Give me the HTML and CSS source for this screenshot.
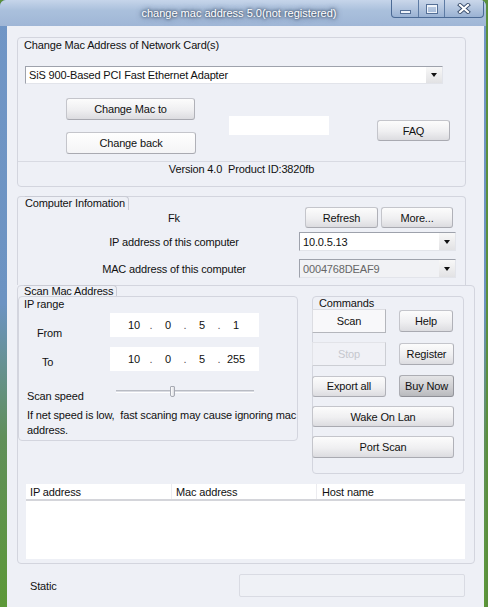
FILE: index.html
```html
<!DOCTYPE html>
<html lang="en">
<head>
    <meta charset="UTF-8">
    <meta name="viewport" content="width=device-width, initial-scale=1.0">
    <title>change mac address 5.0(not registered)</title>
    <link rel="stylesheet" href="styles.css">
</head>
<body>
<div class="window">
    <div class="titlebar">
        <div class="title">change mac address 5.0(not registered)</div>
        <div class="caption-buttons">
            <span class="cap-btn cap-min"><i></i></span>
            <span class="cap-btn cap-max"><i></i></span>
            <span class="cap-btn cap-close">
                <svg width="14" height="11" viewBox="0 0 14 11">
                    <path d="M3 2 L11 9 M11 2 L3 9" stroke="#3b4f6e" stroke-width="4" stroke-linecap="square"/>
                    <path d="M3 2 L11 9 M11 2 L3 9" stroke="#fff" stroke-width="2.2" stroke-linecap="square"/>
                </svg>
            </span>
        </div>
    </div>

    <div class="client">
        <!-- Network card selection -->
        <div class="group group-card">
            <div class="group-title">Change Mac Address of Network Card(s)</div>
            <div class="combo combo-card">
                <span class="combo-value">SiS 900-Based PCI Fast Ethernet Adapter</span>
                <span class="combo-arrow"></span>
            </div>
            <div class="card-actions">
                <div class="change-buttons">
                    <button class="btn btn-change">Change Mac to</button>
                    <button class="btn btn-change btn-back">Change back</button>
                </div>
                <input class="mac-input" type="text">
                <button class="btn btn-faq">FAQ</button>
            </div>
            <div class="version">Version 4.0&nbsp; Product ID:3820fb</div>
        </div>

        <!-- Local computer info -->
        <div class="group group-info">
            <div class="info-title"><span class="tab">Computer Infomation</span></div>
            <div class="info-row">
                <div class="info-label">Fk</div>
                <div class="info-buttons">
                    <button class="btn btn-refresh">Refresh</button>
                    <button class="btn btn-more">More...</button>
                </div>
            </div>
            <div class="info-row info-row-ip">
                <div class="info-label">IP address of this computer</div>
                <div class="combo combo-info">
                    <span class="combo-value">10.0.5.13</span>
                    <span class="combo-arrow"></span>
                </div>
            </div>
            <div class="info-row info-row-mac">
                <div class="info-label">MAC address of this computer</div>
                <div class="combo combo-info combo-mac">
                    <span class="combo-value">0004768DEAF9</span>
                    <span class="combo-arrow"></span>
                </div>
            </div>
        </div>

        <!-- Scanner -->
        <div class="group group-scan">
            <div class="scan-title"><span class="tab">Scan Mac Address</span></div>
            <div class="scan-body">
                <div class="group range-group">
                    <div class="range-title">IP range</div>
                    <div class="ip-row ip-row-from">
                        <div class="ip-label">From</div>
                        <div class="ip-field">
                            <span class="octet">10</span><span class="dot">.</span>
                            <span class="octet">0</span><span class="dot">.</span>
                            <span class="octet">5</span><span class="dot">.</span>
                            <span class="octet">1</span>
                        </div>
                    </div>
                    <div class="ip-row ip-row-to">
                        <div class="ip-label ip-label-to">To</div>
                        <div class="ip-field">
                            <span class="octet">10</span><span class="dot">.</span>
                            <span class="octet">0</span><span class="dot">.</span>
                            <span class="octet">5</span><span class="dot">.</span>
                            <span class="octet">255</span>
                        </div>
                    </div>
                    <div class="speed-row">
                        <div class="speed-label">Scan speed</div>
                        <div class="slider">
                            <span class="slider-track slider-left"></span>
                            <span class="slider-thumb"></span>
                            <span class="slider-track slider-right"></span>
                        </div>
                    </div>
                    <div class="speed-note">If net speed is low,&nbsp; fast scaning may cause ignoring mac<br>address.</div>
                </div>

                <div class="group commands-group">
                    <div class="commands-title">Commands</div>
                    <div class="commands-grid">
                        <button class="btn btn-flat btn-scan">Scan</button>
                        <button class="btn btn-help">Help</button>
                        <button class="btn btn-flat btn-stop" disabled>Stop</button>
                        <button class="btn btn-register">Register</button>
                        <button class="btn btn-export">Export all</button>
                        <button class="btn btn-buy">Buy Now</button>
                        <button class="btn btn-wide btn-wake">Wake On Lan</button>
                        <button class="btn btn-wide btn-port">Port Scan</button>
                    </div>
                </div>
            </div>

            <div class="host-list">
                <div class="list-header">
                    <span class="col col-ip">IP address</span>
                    <span class="col col-mac">Mac address</span>
                    <span class="col col-host">Host name</span>
                </div>
            </div>
        </div>

        <div class="status-row">
            <div class="status-label">Static</div>
            <div class="status-box"></div>
        </div>
    </div>
</div>
</body>
</html>
```

FILE: styles.css
```css
body {
    margin: 0;
    background: #5b8f3c;
    font-family: "Liberation Sans", Arial, sans-serif;
    font-size: 11px;
    letter-spacing: -0.15px;
    color: #111;
}

.window {
    width: 486px;
    height: 607px;
    overflow: hidden;
    border-radius: 6px 6px 0 0;
    background: linear-gradient(to bottom, #7196c6 0%, #6c93c2 50%, #608f5a 72%, #5c9838 100%);
}

/* Title bar */
.titlebar {
    display: flex;
    align-items: flex-start;
    height: 26px;
    background: linear-gradient(to bottom, #c6d5ea 0%, #aac0dc 40%, #9fb6d6 100%);
}

.title {
    flex: 1;
    padding-left: 87px;
    text-align: center;
    line-height: 26px;
    color: #fff;
    font-size: 11px;
    letter-spacing: 0;
    text-shadow: 0 0 3px #1d2d44, 0 0 6px #2a3e5c;
}

.caption-buttons {
    display: flex;
    height: 17px;
    margin-right: 2px;
    border: 1px solid #4b6a95;
    border-top: none;
    border-radius: 0 0 4px 4px;
    overflow: hidden;
    background: linear-gradient(to bottom, #cad7ea, #9ab2d3);
}

.cap-btn {
    display: flex;
    align-items: center;
    justify-content: center;
    border-left: 1px solid #5d7ba4;
}

.cap-min {
    width: 26px;
    border-left: none;
}

.cap-min i {
    display: block;
    width: 9px;
    height: 2px;
    margin-top: 6px;
    background: #eef3fa;
    border: 1px solid #546f96;
}

.cap-max {
    width: 25px;
}

.cap-max i {
    display: block;
    width: 8px;
    height: 5px;
    border: 1px solid #eef3fa;
    border-top-width: 2px;
    outline: 1px solid #546f96;
}

.cap-close {
    width: 38px;
}

/* Client area */
.client {
    width: 477px;
    height: 581px;
    margin-left: 7px;
    background: #eef0f6;
    overflow: hidden;
}

.group {
    box-sizing: border-box;
    border: 1px solid #d3d5de;
    border-radius: 4px;
}

/* group caption drawn in its own little tab */
.tab {
    display: inline-block;
    padding-right: 3px;
    border-top: 1px solid #c9cbd4;
    border-right: 1px solid #c9cbd4;
    border-top-right-radius: 4px;
}

.btn {
    box-sizing: border-box;
    padding: 0;
    font-family: inherit;
    font-size: 11px;
    letter-spacing: -0.15px;
    color: #111;
    background: linear-gradient(to bottom, #fcfcfc 0%, #efeff1 55%, #dcdce0 100%);
    border: 1px solid #c4c5cb;
    border-right-color: #b0b1b8;
    border-bottom-color: #a9aab1;
    border-radius: 3px;
}

.combo {
    display: flex;
    align-items: center;
    box-sizing: border-box;
    background: #fff;
    border: 1px solid #9ea2ac;
    border-right-color: #e2e4ea;
    border-bottom-color: #e2e4ea;
}

.combo-value {
    flex: 1;
    padding-left: 3px;
    white-space: nowrap;
    overflow: hidden;
}

.combo-arrow {
    display: flex;
    align-items: center;
    justify-content: center;
    width: 16px;
    height: 100%;
    background: linear-gradient(to bottom, #f8f8f8, #e2e2e4);
}

.combo-arrow::after {
    content: "";
    border-left: 3.5px solid transparent;
    border-right: 3.5px solid transparent;
    border-top: 4px solid #111;
}

/* Network card group */
.group-card {
    width: 449px;
    margin: 11px 0 0 10px;
    padding-bottom: 10px;
}

.group-title {
    padding-left: 6px;
    line-height: 14px;
}

.combo-card {
    width: 418px;
    height: 18px;
    margin: 14px 0 0 7px;
}

.card-actions {
    display: flex;
    align-items: flex-start;
    margin: 14px 0 0 48px;
}

.change-buttons {
    display: flex;
    flex-direction: column;
    gap: 12px;
    width: 130px;
}

.btn-change {
    width: 129px;
    height: 22px;
}

.btn-back {
    width: 130px;
    background: linear-gradient(to bottom, #fefefe, #f4f4f6);
}

.mac-input {
    width: 100px;
    height: 19px;
    margin: 18px 0 0 33px;
    padding: 0;
    border: none;
    background: #fff;
}

.btn-faq {
    width: 73px;
    height: 21px;
    margin: 22px 0 0 48px;
}

.version {
    margin-top: 7px;
    border-top: 1px solid #d8dae2;
    line-height: 14px;
    text-align: center;
}

/* Computer info group */
.group-info {
    width: 449px;
    margin: 9px 0 0 10px;
    padding-bottom: 7px;
    border-bottom: none;
    border-radius: 4px 4px 0 0;
}

.info-title {
    height: 10px;
    padding-left: 7px;
    line-height: 13px;
}

.info-title .tab {
    margin-top: -2px;
}

.info-row {
    display: flex;
    align-items: center;
}

.info-row-ip {
    margin-top: 4px;
}

.info-row-mac {
    margin-top: 8px;
}

.info-label {
    box-sizing: border-box;
    width: 281px;
    padding-left: 31px;
    text-align: center;
    line-height: 14px;
}

.info-buttons {
    display: flex;
    gap: 3px;
    margin-left: 6px;
}

.btn-refresh {
    width: 73px;
    height: 21px;
}

.btn-more {
    width: 72px;
    height: 21px;
}

.combo-info {
    width: 157px;
    height: 19px;
}

.combo-mac {
    background: #f1f2f5;
    color: #666;
}

/* Scan group */
.group-scan {
    width: 458px;
    margin-left: 10px;
    padding-bottom: 4px;
}

.scan-title {
    height: 10px;
    padding-left: 6px;
    line-height: 11px;
}

.scan-title .tab {
    margin-top: -2px;
}

.scan-body {
    display: flex;
    align-items: flex-start;
}

.range-group {
    width: 280px;
    height: 145px;
}

.range-title {
    height: 13px;
    padding-left: 5px;
    line-height: 14px;
}

.ip-row {
    display: flex;
    align-items: flex-start;
}

.ip-row-from {
    margin-top: 3px;
}

.ip-row-to {
    margin-top: 7px;
}

.ip-label {
    box-sizing: border-box;
    width: 91px;
    padding-left: 18px;
    margin-top: 13px;
    line-height: 14px;
}

.ip-label-to {
    padding-left: 23px;
    margin-top: 8px;
}

.ip-field {
    display: flex;
    align-items: center;
    box-sizing: border-box;
    width: 149px;
    height: 24px;
    padding-left: 12px;
    background: #fff;
}

.octet {
    width: 24px;
    text-align: center;
}

.dot {
    width: 10px;
    text-align: center;
    color: #555;
}

.speed-row {
    display: flex;
    margin-top: 14px;
}

.speed-label {
    box-sizing: border-box;
    width: 97px;
    padding-left: 8px;
    margin-top: 4px;
    line-height: 14px;
}

.slider {
    display: flex;
    align-items: center;
    width: 138px;
    height: 12px;
}

.slider-track {
    height: 1px;
    border-top: 1px solid #b9bcc4;
    border-bottom: 1px solid #fff;
    background: #d9dbe2;
}

.slider-left {
    width: 54px;
}

.slider-right {
    flex: 1;
}

.slider-thumb {
    box-sizing: border-box;
    width: 5px;
    height: 11px;
    background: linear-gradient(to right, #fff, #dcdde2);
    border: 1px solid #a7aab3;
    border-radius: 1px 1px 2px 2px;
}

.speed-note {
    margin-top: 5px;
    padding-left: 8px;
    line-height: 15px;
    white-space: nowrap;
}

/* Commands */
.commands-group {
    width: 152px;
    height: 178px;
    margin-left: 14px;
}

.commands-title {
    height: 12px;
    padding-left: 6px;
    line-height: 12px;
}

.commands-grid {
    display: grid;
    grid-template-columns: 74px 55px;
    column-gap: 13px;
    row-gap: 9px;
    align-items: center;
    margin-left: -1px;
}

.btn-flat {
    width: 74px;
    height: 24px;
    border-radius: 0;
    background: #f8f8fa;
    border-color: #dcdde2 #b4b6bc #b4b6bc #dcdde2;
}

.btn-stop {
    color: #c6c8ce;
    background: #f0f1f6;
    border-color: #e2e3e8 #ccced4 #ccced4 #e2e3e8;
}

.btn-help {
    width: 54px;
    height: 22px;
}

.btn-register,
.btn-buy {
    width: 55px;
    height: 22px;
}

.btn-export {
    width: 74px;
    height: 21px;
}

.btn-buy {
    background: linear-gradient(to bottom, #e4e4e6 0%, #cfcfd2 55%, #b9babe 100%);
    border-color: #acadb3 #94959c #8e8f96 #acadb3;
}

.btn-wide {
    grid-column: 1 / 3;
    width: 142px;
    height: 21px;
}

.btn-port {
    height: 22px;
}

/* Host list */
.host-list {
    width: 439px;
    height: 75px;
    margin: 10px 0 0 8px;
    background: #fff;
}

.list-header {
    display: flex;
    height: 15px;
    border-bottom: 2px solid #d4d5da;
}

.col {
    box-sizing: border-box;
    padding-left: 4px;
    line-height: 16px;
    border-right: 1px solid #ececf0;
}

.col-ip {
    width: 146px;
}

.col-mac {
    width: 145px;
}

.col-host {
    flex: 1;
    padding-left: 5px;
    border-right: none;
}

/* Status line */
.status-row {
    display: flex;
    align-items: center;
    margin-top: 10px;
    padding-left: 23px;
}

.status-label {
    width: 209px;
    line-height: 14px;
}

.status-box {
    box-sizing: border-box;
    width: 226px;
    height: 23px;
    background: #eff1f6;
    border: 1px solid #d9dbe3;
    border-radius: 2px;
}
```
